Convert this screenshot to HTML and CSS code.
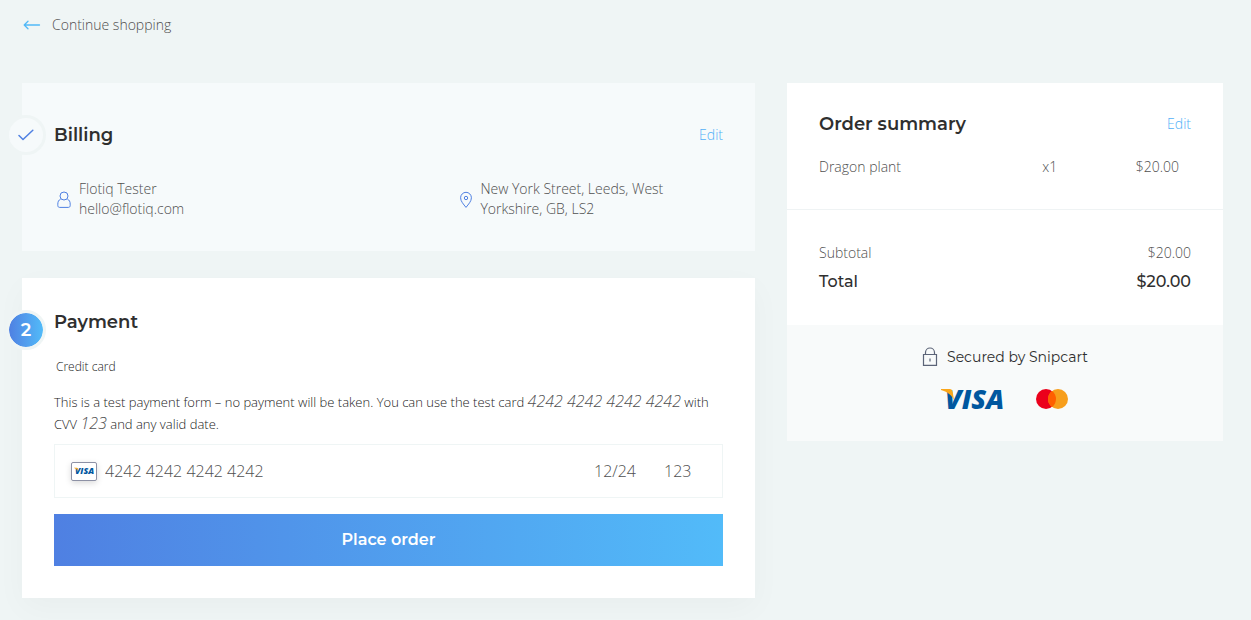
FILE: index.html
```html
<!DOCTYPE html>
<html lang="en">
<head>
<meta charset="utf-8">
<meta name="viewport" content="width=device-width, initial-scale=1">
<title>Checkout</title>
<link rel="stylesheet" href="styles.css">
</head>
<body>
<header class="topbar">
  <a class="back" href="#">
    <svg class="back-icon" width="18" height="10" viewBox="0 0 18 10" fill="none" stroke="currentColor" stroke-width="1.3" stroke-linecap="round" stroke-linejoin="round" aria-hidden="true"><path d="M1.5 5H16.5M5 1.2 1.2 5 5 8.8"/></svg>
    <span>Continue shopping</span>
  </a>
</header>
<main class="layout">
  <div class="steps">
    <section class="card card-done">
      <span class="badge badge-done">
        <svg width="16" height="12" viewBox="0 0 16 12" fill="none" stroke="currentColor" stroke-width="1.5" stroke-linecap="round" stroke-linejoin="round" aria-hidden="true"><path d="M1 6.5 5 10.5 14.8 1.2"/></svg>
      </span>
      <div class="card-head card-head-tall">
        <h2 class="title">Billing</h2>
        <a class="edit" href="#">Edit</a>
      </div>
      <div class="details">
        <div class="detail">
          <svg class="detail-icon" width="14" height="18" viewBox="0 0 14 18" fill="none" stroke="currentColor" aria-hidden="true"><circle cx="7" cy="6" r="4"/><path d="M3.6 9.2C1.6 10 .8 11.800 .8 14.200V15.500C.8 16.700 1.500 17.400 2.700 17.400H11.300C12.500 17.400 13.200 16.700 13.200 15.500V14.200C13.200 11.800 12.400 10 10.400 9.200"/></svg>
          <p class="detail-text">Flotiq Tester<br>hello@flotiq.com</p>
        </div>
        <div class="detail">
          <svg class="detail-icon" width="14" height="18" viewBox="0 0 14 18" fill="none" stroke="currentColor" aria-hidden="true"><path d="M8 17.400C5.500 14.200 2.600 11.300 2.600 7.800A5.400 5.500 0 0 1 13.400 7.800C13.400 11.300 10.500 14.200 8 17.400Z"/><circle cx="8" cy="8" r="1.700"/></svg>
          <p class="detail-text">New York Street, Leeds, West Yorkshire, GB, LS2</p>
        </div>
      </div>
    </section>

    <section class="card card-active">
      <span class="badge badge-active">2</span>
      <div class="card-head">
        <h2 class="title">Payment</h2>
      </div>
      <p class="method">Credit card</p>
      <p class="note">This is a test payment form – no payment will be taken. You can use the test card <em>4242 4242 4242 4242</em> with CVV <em>123</em> and any valid date.</p>
      <form class="form">
        <div class="field">
          <span class="brand-chip">
            <svg width="20" height="12" viewBox="0 -7 62 36" role="img" aria-label="Visa"><text class="visa" x="3" y="21">VISA</text><path class="visa-flag" d="M0 1H8.500C10.500 1 11.300 2 11.700 4L13 12C10.500 7 6 3.500 0 2Z"/></svg>
          </span>
          <input class="input input-number" aria-label="Card number" value="4242 4242 4242 4242">
          <input class="input input-expiry" aria-label="Expiry date" value="12/24">
          <input class="input input-cvv" aria-label="Security code" value="123">
        </div>
        <button class="submit" type="button">Place order</button>
      </form>
    </section>
  </div>

  <aside class="summary">
    <div class="summary-items">
      <div class="card-head card-head-short">
        <h2 class="title">Order summary</h2>
        <a class="edit" href="#">Edit</a>
      </div>
      <table class="items">
        <tr><td class="item-name">Dragon plant</td><td>x1</td><td class="item-price">$20.00</td></tr>
      </table>
    </div>
    <dl class="totals">
      <div class="total-row"><dt>Subtotal</dt><dd>$20.00</dd></div>
      <div class="total-row total-row-main"><dt>Total</dt><dd>$20.00</dd></div>
    </dl>
    <footer class="secure">
      <p class="secure-label">
        <svg width="16" height="20" viewBox="0 0 16 20" fill="none" stroke="#5c6478" stroke-width="1.200" aria-hidden="true"><path d="M1.500 7.500H14.500V18.400H1.500ZM3.500 7.500V5.500A4.500 4.500 0 0 1 12.500 5.500V7.500M8 11.500V14.500"/></svg>
        <span>Secured by Snipcart</span>
      </p>
      <div class="brands">
        <svg width="64" height="36" viewBox="0 -7 64 36" role="img" aria-label="Visa"><text class="visa" x="4" y="21">VISA</text><path class="visa-flag" d="M0 1H8.500C10.500 1 11.300 2 11.700 4L13 12C10.500 7 6 3.500 0 2Z"/></svg>
        <svg width="34" height="20" viewBox="0 0 34 20" role="img" aria-label="Mastercard"><circle cx="11" cy="10" r="10" fill="#eb001b"/><circle cx="23" cy="10" r="10" fill="#f79e1b"/><path d="M17 2A10 10 0 0 1 17 18A10 10 0 0 1 17 2Z" fill="#ff5f00"/></svg>
      </div>
    </footer>
  </aside>
</main>
</body>
</html>
```

FILE: styles.css
```css
* { box-sizing: border-box; }

body {
  margin: 0;
  padding: 0 28px 22px 22px;
  background: #eff5f5;
  color: #4f4f4f;
  font: 300 14px/20px "Open Sans", "Liberation Sans", sans-serif;
}

h2, p, dl, dd { margin: 0; }
a { text-decoration: none; }

.topbar { padding: 15px 0 48px; }
.back { display: inline-flex; align-items: center; gap: 11px; color: inherit; }
.back-icon { color: #52b9f7; margin-left: 1px; }

.layout {
  display: grid;
  grid-template-columns: 733fr 436fr;
  gap: 32px;
  align-items: start;
}
.steps { display: grid; gap: 27px; }

.card { position: relative; padding: 32px; }
.card-done { background: #f6fafb; }
.card-active { background: #fff; box-shadow: 0 10px 30px rgba(0, 0, 0, .03); }

.card-head { display: flex; align-items: center; justify-content: space-between; height: 24px; }
.card-head-tall { height: 40px; }
.card-head-short { height: 18px; }
.title {
  color: #2f2f2f;
  font: 600 18px/24px Montserrat, Inter, sans-serif;
}
.edit { color: #52b0f7; }

.badge {
  position: absolute;
  top: 32px;
  left: -16px;
  display: flex;
  align-items: center;
  justify-content: center;
  width: 40px;
  height: 40px;
  border: 3px solid #eff5f5;
  border-radius: 50%;
}
.badge-done { background: #f6fafb; color: #4f80e2; }
.badge-active {
  background: linear-gradient(90deg, #4f80e2, #52bbf9) padding-box, #eff5f5;
  color: #fff;
  font: 600 18px/20px Montserrat, Inter, sans-serif;
}

.details { display: grid; grid-template-columns: 3fr 2fr; margin-top: 24px; }
.detail { display: flex; align-items: center; gap: 8px; padding-left: 3px; }
.detail-icon { flex: none; color: #4f80e2; }

.method { margin-top: 23px; padding-left: 2px; color: #222; font-size: 12px; }
.note { margin-top: 14px; color: #222; font-size: 13px; line-height: 22px; }
.note em { color: #4f4f4f; font-size: 16px; line-height: 20px; }

.form { display: grid; gap: 16px; margin-top: 9px; }
.field {
  display: flex;
  align-items: center;
  height: 54px;
  padding: 0 16px;
  border: 1px solid #eff5f5;
}
.brand-chip {
  display: flex;
  align-items: center;
  justify-content: center;
  width: 26px;
  height: 19px;
  margin-right: 8px;
  border: 1px solid #8d91a5;
  border-radius: 2px;
  background: #fff;
  box-shadow: 0 2px 6px rgba(0, 0, 0, .15);
}
.input {
  min-width: 0;
  padding: 0;
  border: 0;
  outline: 0;
  background: none;
  color: #4f4f4f;
  font: 300 16px/24px "Open Sans", "Liberation Sans", sans-serif;
}
.input-number { flex: 1; }
.input-expiry { width: 70px; }
.input-cvv { width: 42px; }
.submit {
  height: 52px;
  border: 0;
  background: linear-gradient(90deg, #4f80e2, #52bbf9);
  color: #fff;
  font: 600 16px/20px Montserrat, Inter, sans-serif;
}

.summary { background: #fff; }
.summary-items { padding: 32px; border-bottom: 1px solid #eff3f4; }
.items { width: 100%; margin-top: 24px; border-collapse: collapse; table-layout: fixed; }
.items td { padding: 0; }
.item-name { width: 60%; }
.items .item-price { padding-right: 12px; text-align: right; }

.totals { display: grid; gap: 9px; padding: 33px 32px; }
.total-row { display: flex; justify-content: space-between; }
.total-row-main { color: #2f2f2f; font: 500 16px/20px Montserrat, Inter, sans-serif; }

.secure { padding: 22px 32px 24px; background: #f8fafa; }
.secure-label {
  display: flex;
  align-items: center;
  justify-content: center;
  gap: 9px;
  color: #2f2f2f;
  font: 400 14px/20px Montserrat, Inter, sans-serif;
}
.brands { display: flex; align-items: center; justify-content: center; gap: 30px; margin-top: 14px; }
.visa { fill: #00579f; font: italic 800 27px "Open Sans", "Liberation Sans", sans-serif; }
.visa-flag { fill: #faa61a; }
```
